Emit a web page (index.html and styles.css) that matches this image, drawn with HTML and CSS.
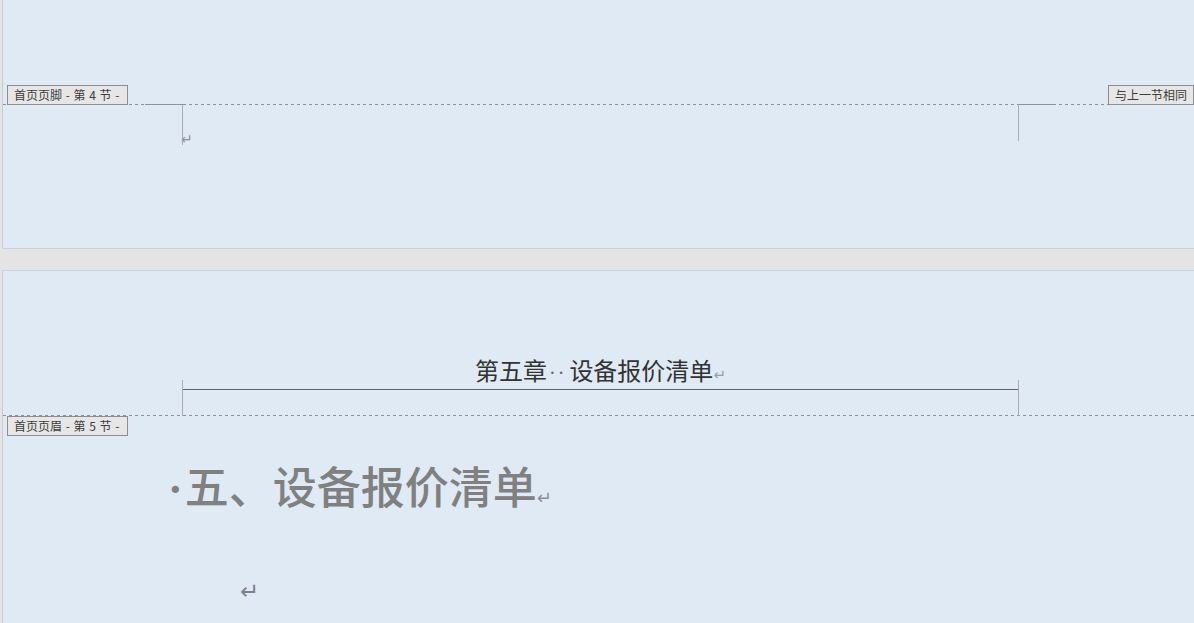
FILE: index.html
```html
<!DOCTYPE html>
<html lang="zh-CN">
<head>
<meta charset="utf-8">
<title>设备报价清单</title>
<link rel="stylesheet" href="styles.css">
</head>
<body>
<div class="doc">
  <section class="page page-first">
    <div class="zone zone-footer-top">
      <span class="tab tab-left">首页页脚 - 第 4 节 -</span>
      <span class="tab tab-right">与上一节相同</span>
    </div>
    <div class="footer-body">
      <span class="mark mark-v mark-left-foot"></span>
      <span class="mark mark-h mark-left-foot-h"></span>
      <span class="mark mark-v mark-right-foot"></span>
      <span class="mark mark-h mark-right-foot-h"></span>
      <p class="footer-para"><span class="ret">↵</span></p>
    </div>
  </section>

  <section class="page page-second">
    <div class="zone zone-header">
      <span class="mark mark-v mark-left-head"></span>
      <span class="mark mark-v mark-right-head"></span>
      <p class="header-para">第五章<span class="dots">··</span>设备报价清单<span class="ret ret-small">↵</span></p>
    </div>
    <span class="tab tab-left tab-below">首页页眉 - 第 5 节 -</span>
    <div class="content">
      <h1 class="chapter"><span class="bullet">·</span>五、设备报价清单<span class="ret ret-h">↵</span></h1>
      <p class="empty-para"><span class="ret ret-big">↵</span></p>
    </div>
  </section>
</div>
</body>
</html>
```

FILE: styles.css
```css
html, body {
  margin: 0;
  padding: 0;
  height: 100%;
  overflow: hidden;
}

body {
  background: #e4e4e4;
  font-family: "Noto Sans CJK SC", "Noto Sans", sans-serif;
}

.doc {
  display: flex;
  flex-direction: column;
  gap: 21px;
  padding-left: 2px;
}

.page {
  position: relative;
  background: #dfeaf5;
  border-left: 1px solid #c9cdd2;
}

.page-first {
  height: 248px;
  border-bottom: 1px solid #cdd1d6;
}

.page-second {
  height: 352px;
  border-top: 1px solid #cdd1d6;
}

/* dashed section boundary */
.zone {
  position: relative;
  background-image: repeating-linear-gradient(to right, #8e9399 0 3px, transparent 3px 6px);
  background-size: 100% 1px;
  background-repeat: no-repeat;
  background-position: left bottom;
}

.zone-footer-top {
  height: 105px;
}

.zone-header {
  height: 145px;
}

.tab {
  position: absolute;
  box-sizing: border-box;
  height: 20px;
  line-height: 18px;
  padding: 0 6px;
  font-size: 12px;
  color: #3c3c3c;
  background: #e6e6e6;
  border: 1px solid #8d8d8d;
  white-space: nowrap;
  word-spacing: 1px;
  font-family: "Noto Sans CJK SC", "Noto Sans", sans-serif;
}

.tab-left {
  left: 4px;
  bottom: 0;
  width: 121px;
}

.tab-right {
  right: 0;
  bottom: 0;
  width: 86px;
  text-align: center;
  padding: 0;
}

.tab-below {
  top: 145px;
  bottom: auto;
}

/* crop marks at the text area corners */
.mark {
  position: absolute;
  background: #a8adb3;
}

.mark-v {
  width: 1px;
}

.mark-h {
  height: 1px;
  background: #8e9399;
}

.footer-body {
  position: relative;
  height: 143px;
}

.mark-left-foot { left: 179px; top: 0; height: 40px; }
.mark-right-foot { left: 1015px; top: 0; height: 36px; }
.mark-left-foot-h { left: 142px; top: -1px; width: 38px; }
.mark-right-foot-h { left: 1015px; top: -1px; width: 38px; }

.mark-left-head { left: 179px; top: 109px; height: 36px; }
.mark-right-head { left: 1015px; top: 109px; height: 36px; }

.footer-para {
  margin: 0;
  padding: 22px 0 0 178px;
  line-height: 20px;
}

.ret {
  font-family: "DejaVu Sans", sans-serif;
  color: #8a8e94;
  font-size: 14px;
  font-weight: normal;
}

.header-para {
  margin: 0 0 0 179px;
  width: 837px;
  padding: 84px 0 4px 0;
  height: 30px;
  line-height: 30px;
  text-align: center;
  font-size: 24px;
  color: #333;
  border-bottom: 1px solid #5d6470;
  box-sizing: content-box;
}

.header-para .dots {
  font-family: "Liberation Serif", serif;
  color: #666;
  font-size: 20px;
  letter-spacing: 2px;
  padding: 0 3px 0 2px;
}

.ret-small {
  font-size: 15px;
  color: #9a9ea4;
}

.content {
  padding-left: 165px;
}

.chapter {
  margin: 39px 0 0 0;
  line-height: 60px;
  font-size: 44px;
  font-weight: 500;
  color: #808080;
  letter-spacing: 0;
}

.chapter .bullet {
  font-family: "Liberation Serif", serif;
  font-weight: bold;
  margin-right: 2px;
}

.ret-h {
  font-size: 18px;
  color: #8c9096;
}

.empty-para {
  margin: 48px 0 0 72px;
  line-height: 30px;
}

.ret-big {
  font-size: 23px;
  color: #7d8187;
}
```
